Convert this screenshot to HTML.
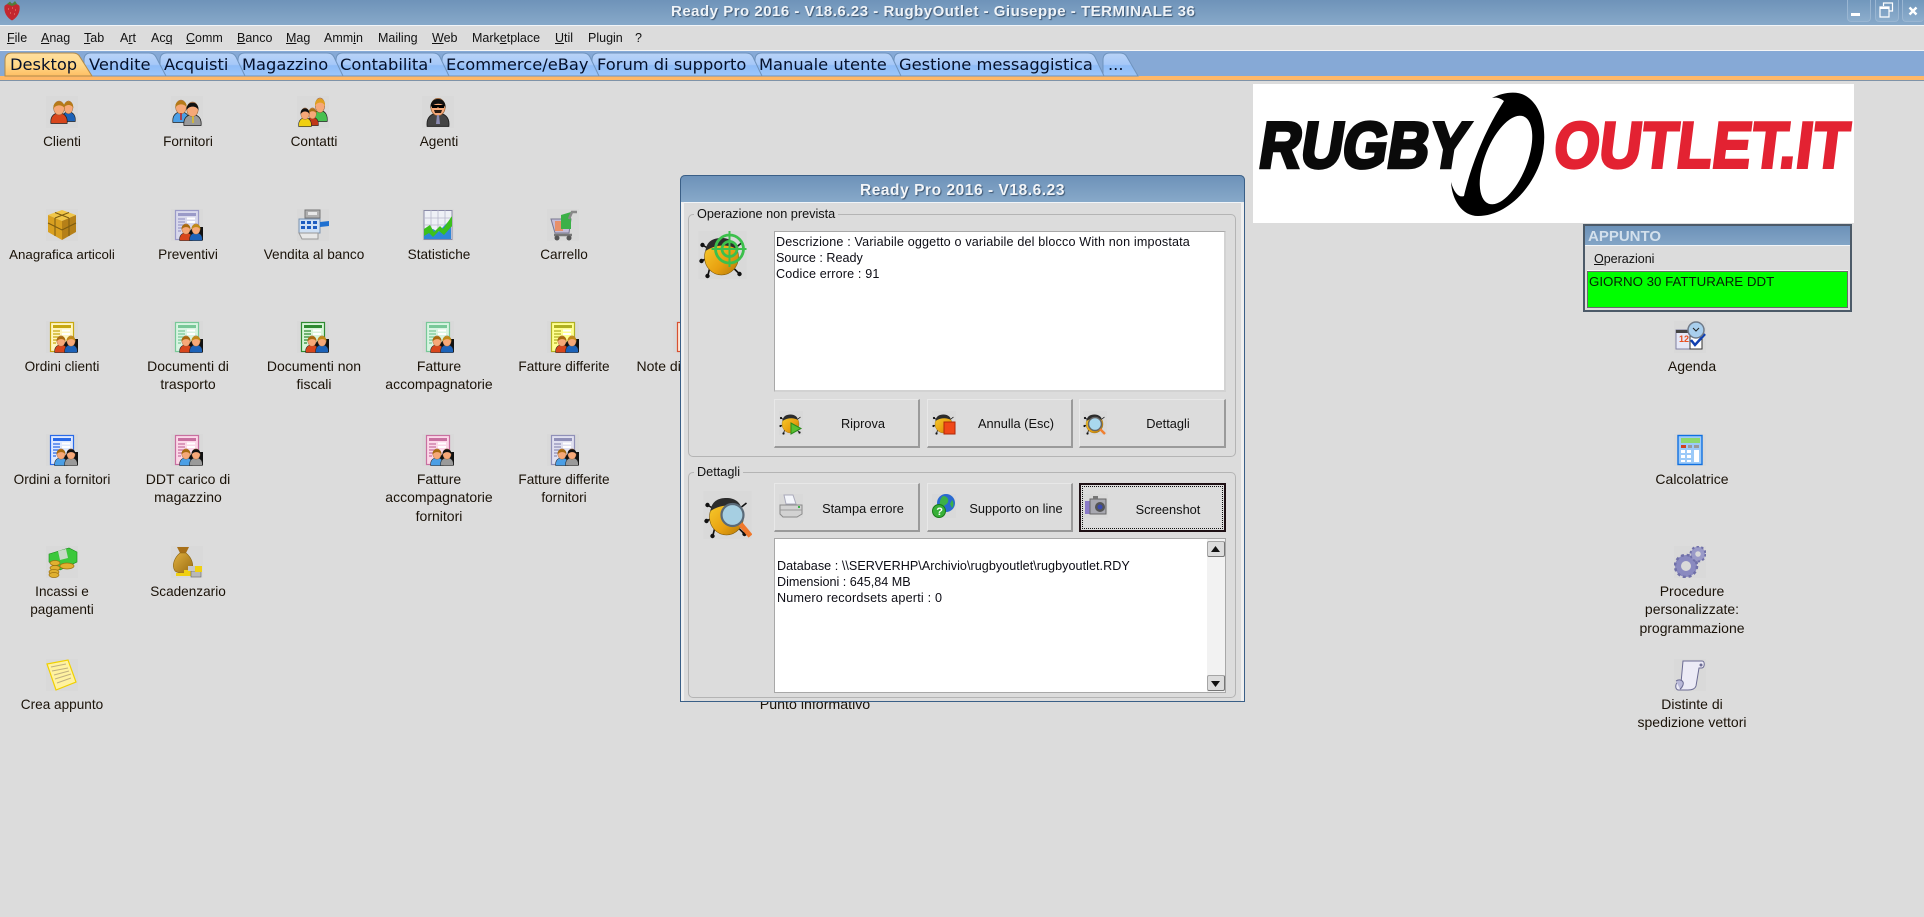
<!DOCTYPE html>
<html lang="it"><head><meta charset="utf-8"><title>Ready Pro 2016</title>
<style>
html,body{margin:0;padding:0}
body{width:1924px;height:917px;overflow:hidden;background:#dcdcdc;position:relative;font-family:"Liberation Sans",sans-serif;color:#111}
.a{position:absolute}
svg.i{position:absolute;width:32px;height:32px}
.l{position:absolute;width:140px;text-align:center;font-size:13.6px;line-height:18.3px;color:#1a1208}
.w{font-size:14px;margin-top:-1px}
.m{position:absolute;top:31px;font-size:12.5px;line-height:15px;color:#111}
.t{position:absolute;top:53px;font:16.3px/24px "DejaVu Sans",sans-serif;color:#05102a;white-space:nowrap}
.btn{position:absolute;width:146px;height:49px;box-sizing:border-box;background:#dcdcdc;border:1px solid #c4c4c4;border-right:2px solid #9a9a9a;border-bottom:2px solid #9a9a9a;border-top-color:#e8e8e8;border-left-color:#e8e8e8}
.bt{position:absolute;width:146px;text-align:center;font-size:12.8px;line-height:16px;color:#111}
.tx{position:absolute;font-size:12.6px;line-height:16px;white-space:nowrap;color:#0c0c14}
.grp{position:absolute;box-sizing:border-box;border:1px solid #b4b4b4;border-radius:5px}
.lg{position:absolute;background:#dcdcdc;padding:0 3px;font-size:12.7px;line-height:16px;color:#111;white-space:nowrap}
.wb{position:absolute;top:0;width:24px;height:22px;box-sizing:border-box;background:linear-gradient(#7197bc,#8cadcc);border:1px solid #9ab6d2;border-top:0;border-radius:0 0 4px 4px}
.sb{position:absolute;left:1207px;width:18px;height:16px;box-sizing:border-box;background:#dcdcdc;border:1px solid #a5a5a5;border-right-color:#777;border-bottom-color:#777;border-radius:2px}
</style></head><body>

<svg width="0" height="0" style="position:absolute">
<defs>
<linearGradient id="gold" x1="0" y1="0" x2="1" y2="1"><stop offset="0" stop-color="#f8d030"/><stop offset=".6" stop-color="#e8a010"/><stop offset="1" stop-color="#b07808"/></linearGradient>
<linearGradient id="bag" x1="0" y1="0" x2="1" y2="1"><stop offset="0" stop-color="#e0b040"/><stop offset="1" stop-color="#9a6c10"/></linearGradient>
<linearGradient id="tb" x1="0" y1="0" x2="0" y2="1"><stop offset="0" stop-color="#b9d3f7"/><stop offset=".5" stop-color="#a6c8f8"/><stop offset=".55" stop-color="#8fbcf7"/><stop offset="1" stop-color="#9cc6fb"/></linearGradient>
<linearGradient id="ta" x1="0" y1="0" x2="0" y2="1"><stop offset="0" stop-color="#ffdf9e"/><stop offset=".5" stop-color="#ffd88a"/><stop offset="1" stop-color="#ffbf63"/></linearGradient>
<symbol id="p" viewBox="0 0 20 24" preserveAspectRatio="none"><path d="M1 23.500C0 16 5 13 10 13s10 3 9 10.500Z" stroke="#222" stroke-width=".8"/><ellipse cx="10" cy="8" rx="6" ry="7" fill="#f6a878" stroke="#8a5a30" stroke-width=".5"/><path d="M3.800 9C2.500 -1 17.500 -1 16.200 9 15 4.500 6 4 3.800 9Z" style="fill:var(--h,#a86a10)"/></symbol>
<symbol id="doc" viewBox="0 0 32 32">
<rect width="32" height="32" fill="#d9d9d9"/>
<rect x="4.500" y="1.500" width="23" height="29" style="fill:var(--b,#fff);stroke:var(--c)" stroke-width="1.200"/>
<rect x="7" y="4" width="18" height="3" style="fill:var(--c)"/>
<path d="M7 10h7M7 13h7M7 16h6M7 19h4M7 22h3" style="stroke:var(--c)" stroke-width="1.200"/>
<path d="M16 9.500h8M16 13h8" stroke="#fff" stroke-width="2"/>
<path d="M22 18h10v13H14v-3Z" fill="#111"/>
</symbol>
<symbol id="bug" viewBox="0 0 48 48">
<rect width="48" height="48" fill="#d9d9d9"/>
<path d="M9 17 4 14M7 28 3 30M11 38 9 46M36 38 41 43M38 16 43 12" stroke="#111" stroke-width="1.600" fill="none"/>
<circle cx="4" cy="14" r="2.200" fill="#111"/><circle cx="3" cy="30" r="2.200" fill="#111"/><circle cx="9" cy="45" r="2.200" fill="#111"/><circle cx="41" cy="43" r="2.200" fill="#111"/>
<ellipse cx="23" cy="26" rx="17" ry="18" fill="url(#gold)" stroke="#7a5408" stroke-width=".6"/>
<path d="M7 20C8 10 15 7 23 7s14 4 15 11C30 13 17 13 7 20Z" fill="#2c2c2c"/>
</symbol>
</defs>
</svg>

<!-- title bar -->
<div class="a" style="left:0;top:0;width:1924px;height:25px;background:linear-gradient(#6e93b9,#87a9c9)"></div>
<div class="a" style="left:0;top:25px;width:1924px;height:1px;background:#f2f5f8"></div>
<svg class="a" style="left:3px;top:0" width="18" height="21" viewBox="0 0 18 21"><path d="M9 20.500C4 18 .5 12 1.500 6 4 2.500 14 2.500 16.500 6c1 6-2.500 12-7.500 14.500Z" fill="#c3272f"/><path d="M4 4 7 1.500 9 4l3-3 2 3-5 2Z" fill="#4f7f3a"/><path d="M5 9h1M9 8h1M13 10h-1M7 13h1M11 14h1" stroke="#f08a7e"/></svg>
<div class="a" style="left:671px;top:3px;width:540px;font-weight:bold;font-size:15px;letter-spacing:.5px;line-height:18px;color:#eef3f8;text-shadow:1px 1px 1px #3d5570;white-space:nowrap">Ready Pro 2016 - V18.6.23 - RugbyOutlet - Giuseppe - TERMINALE 36</div>
<div class="wb" style="left:1847px"><div class="a" style="left:3px;top:13px;width:9px;height:3px;background:#fff"></div></div>
<div class="wb" style="left:1875px"><svg class="a" style="left:3px;top:2px" width="15" height="16" viewBox="0 0 15 16"><path d="M4.500 4V1h9v8H10M1 5h9v10H1Z" fill="none" stroke="#fff" stroke-width="1.200"/><path d="M1 6h9" stroke="#fff" stroke-width="2"/></svg></div>
<div class="wb" style="left:1902px;width:22px;border-right:0"><svg class="a" style="left:5px;top:6px" width="10" height="10" viewBox="0 0 10 10"><path d="M1.500 1.500l7 7M8.500 1.500l-7 7" stroke="#fff" stroke-width="2.400"/></svg></div>

<!-- menu -->
<div class="m" style="left:7px"><u>F</u>ile</div>
<div class="m" style="left:41px"><u>A</u>nag</div>
<div class="m" style="left:84px"><u>T</u>ab</div>
<div class="m" style="left:120px">A<u>r</u>t</div>
<div class="m" style="left:151px">Ac<u>q</u></div>
<div class="m" style="left:186px"><u>C</u>omm</div>
<div class="m" style="left:237px"><u>B</u>anco</div>
<div class="m" style="left:286px"><u>M</u>ag</div>
<div class="m" style="left:324px">Amm<u>i</u>n</div>
<div class="m" style="left:378px">Mailin<u>g</u></div>
<div class="m" style="left:432px"><u>W</u>eb</div>
<div class="m" style="left:472px">Mark<u>e</u>tplace</div>
<div class="m" style="left:555px"><u>U</u>til</div>
<div class="m" style="left:588px">Plugin</div>
<div class="m" style="left:635px">?</div>

<!-- tabs -->
<div class="a" style="left:0;top:50px;width:1924px;height:1px;background:#f5f5f5"></div>
<div class="a" style="left:0;top:51px;width:1924px;height:25px;background:#86a9d6"></div>
<div class="a" style="left:0;top:76px;width:1924px;height:5px;box-sizing:border-box;background:#ffb868;border-bottom:1px solid #7f93a8"></div>
<svg class="a" style="left:0;top:51px" width="1160" height="26" viewBox="0 51 1160 26">
<g fill="url(#tb)" stroke="#6f93bd" stroke-width="1">
<path d="M1103 76V60Q1103 53 1110 53H1120Q1125 53 1127 57L1138 76Z"/>
<path d="M894 76V60Q894 53 901 53H1088Q1093 53 1095 57L1104 76Z"/>
<path d="M755 76V60Q755 53 762 53H885Q890 53 892 57L901 76Z"/>
<path d="M592 76V60Q592 53 599 53H746Q751 53 753 57L762 76Z"/>
<path d="M442 76V60Q442 53 449 53H583Q588 53 590 57L599 76Z"/>
<path d="M336 76V60Q336 53 343 53H433Q438 53 440 57L449 76Z"/>
<path d="M238 76V60Q238 53 245 53H327Q332 53 334 57L343 76Z"/>
<path d="M160 76V60Q160 53 167 53H229Q234 53 236 57L245 76Z"/>
<path d="M84 76V60Q84 53 91 53H149Q154 53 156 57L166 76Z"/>
</g>
<path d="M5 76V60Q5 53 12 53H73Q78 53 80 57L92 76Z" fill="url(#ta)" stroke="#b08a4a"/>
</svg>
<div class="t" style="left:10px">Desktop</div>
<div class="t" style="left:89px">Vendite</div>
<div class="t" style="left:164px">Acquisti</div>
<div class="t" style="left:242px">Magazzino</div>
<div class="t" style="left:340px">Contabilita'</div>
<div class="t" style="left:446px">Ecommerce/eBay</div>
<div class="t" style="left:597px">Forum di supporto</div>
<div class="t" style="left:759px">Manuale utente</div>
<div class="t" style="left:899px">Gestione messaggistica</div>
<div class="t" style="left:1108px">...</div>

<!-- icons row 1 -->
<svg class="i" style="left:46px;top:96px" viewBox="0 0 32 32"><rect width="32" height="32" fill="#d9d9d9"/><use href="#p" x="15" y="4" width="15" height="22" fill="#1c62b8" style="--h:#b57a18"/><use href="#p" x="4" y="4" width="18" height="24" fill="#d8461c" style="--h:#b57a18"/></svg>
<svg class="i" style="left:171px;top:96px" viewBox="0 0 32 32"><rect width="32" height="32" fill="#d9d9d9"/><use href="#p" x="1" y="3" width="18" height="24" fill="#4b9fe6" style="--h:#b57a18"/><use href="#p" x="12" y="5" width="19" height="25" fill="#9a9a9a" style="--h:#111"/><path d="M10 17v7" stroke="#c02020" stroke-width="1.500"/><path d="M22 20v7" stroke="#e2c020" stroke-width="1.500"/></svg>
<svg class="i" style="left:297px;top:96px" viewBox="0 0 32 32"><rect width="32" height="32" fill="#d9d9d9"/><use href="#p" x="15" y="1" width="16" height="25" fill="#48c050" style="--h:#e0a020"/><use href="#p" x="9" y="11" width="13" height="19" fill="#c03818" style="--h:#a87018"/><use href="#p" x="1" y="11" width="14" height="20" fill="#f0d010" style="--h:#111"/></svg>
<svg class="i" style="left:422px;top:96px" viewBox="0 0 32 32"><rect width="32" height="32" fill="#d9d9d9"/><use href="#p" x="4" y="1" width="24" height="30" fill="#444" style="--h:#111"/><path d="M10 9h12v3h-5l-1-1-1 1h-5Z" fill="#000"/><path d="M12 14h8l-1 3h-6Z" fill="#2a1a10"/><path d="M15 19h2l1 9h-4Z" fill="#8a8ab0"/></svg>
<!-- row 2 -->
<svg class="i" style="left:46px;top:209px" viewBox="0 0 32 32"><rect width="32" height="32" fill="#d9d9d9"/><path d="M2 6 16 1l14 5-14 6Z" fill="#f0c648"/><path d="M2 6v17l14 8V12Z" fill="#d9a020"/><path d="M30 6v17l-14 8V12Z" fill="#b58018"/><path d="M9 3.500l14 5.500M23 3.500 9 9M9 9v18M23 9v18M2 14l14 7 14-7" stroke="#7a5a10" stroke-width="1" fill="none"/></svg>
<svg class="i" style="left:171px;top:209px;--c:#9a9ac8;--b:#d8d8ec" viewBox="0 0 32 32"><use href="#doc" width="32" height="32"/><use href="#p" x="8" y="14" width="14" height="18" fill="#d8461c" style="--h:#a86a10"/><use href="#p" x="18" y="14" width="14" height="18" fill="#1c62b8" style="--h:#c08a18"/></svg>
<svg class="i" style="left:297px;top:209px" viewBox="0 0 32 32"><rect width="32" height="32" fill="#d9d9d9"/><rect x="8" y="1" width="15" height="8" fill="#b0b0b0" stroke="#777"/><rect x="11" y="3" width="9" height="3" fill="#e8e8e8"/><path d="M2 10h21v14H2Z" fill="#cfe0f4" stroke="#7a92b0"/><path d="M4 12h4v3H4ZM10 12h4v3h-4ZM16 12h4v3h-4ZM4 17h4v3H4ZM10 17h4v3h-4ZM16 17h4v3h-4Z" fill="#1d5cc0"/><path d="M2 24h19v6H5Z" fill="#e8e8e8" stroke="#999"/><path d="M23 13l9-1v5l-9 1Z" fill="#1f70d0"/></svg>
<svg class="i" style="left:422px;top:209px" viewBox="0 0 32 32"><rect width="32" height="32" fill="#d9d9d9"/><rect x="2" y="1.500" width="28" height="29" fill="#eef0f6" stroke="#8a8aa8"/><path d="M2 9h28M2 16h28M9 1v29M16 1v29M23 1v29" stroke="#b8b8cc" stroke-width=".8"/><path d="M2 30V24l9-4 5 3 13-13v20Z" fill="#2f86d8"/><path d="M2 20l6-4 4 7 6-6 3 3 9-13v10l-8 9-5-4-6 6-4-4-5 3Z" fill="#3cc01c"/></svg>
<svg class="i" style="left:547px;top:209px" viewBox="0 0 32 32"><rect width="32" height="32" fill="#d9d9d9"/><path d="M4 10h20l-2 14H8Z" fill="#c4bcd8" stroke="#777790"/><rect x="8" y="12" width="8" height="10" fill="#e8906a"/><path d="M14 6l10-3v17H14Z" fill="#3cb048"/><path d="M22 10 25 3h5" fill="none" stroke="#888" stroke-width="2.500"/><path d="M7 26h18" stroke="#777" stroke-width="2.500"/><circle cx="10" cy="29" r="2.500" fill="#555"/><circle cx="22" cy="29" r="2.500" fill="#555"/></svg>
<!-- row 3 -->
<svg class="i" style="left:46px;top:321px;--c:#c8a810;--b:#fff6c0" viewBox="0 0 32 32"><use href="#doc" width="32" height="32"/><use href="#p" x="8" y="14" width="14" height="18" fill="#d8461c"/><use href="#p" x="18" y="14" width="14" height="18" fill="#1c62b8" style="--h:#c08a18"/></svg>
<svg class="i" style="left:171px;top:321px;--c:#78c898;--b:#d8f4e2" viewBox="0 0 32 32"><use href="#doc" width="32" height="32"/><use href="#p" x="8" y="14" width="14" height="18" fill="#d8461c"/><use href="#p" x="18" y="14" width="14" height="18" fill="#1c62b8" style="--h:#c08a18"/></svg>
<svg class="i" style="left:297px;top:321px;--c:#2e8a30;--b:#d8f4d8" viewBox="0 0 32 32"><use href="#doc" width="32" height="32"/><use href="#p" x="8" y="14" width="14" height="18" fill="#d8461c"/><use href="#p" x="18" y="14" width="14" height="18" fill="#1c62b8" style="--h:#c08a18"/></svg>
<svg class="i" style="left:422px;top:321px;--c:#78c898;--b:#d8f4e2" viewBox="0 0 32 32"><use href="#doc" width="32" height="32"/><use href="#p" x="8" y="14" width="14" height="18" fill="#d8461c"/><use href="#p" x="18" y="14" width="14" height="18" fill="#1c62b8" style="--h:#c08a18"/></svg>
<svg class="i" style="left:547px;top:321px;--c:#b0b020;--b:#ffff90" viewBox="0 0 32 32"><use href="#doc" width="32" height="32"/><use href="#p" x="8" y="14" width="14" height="18" fill="#d8461c"/><use href="#p" x="18" y="14" width="14" height="18" fill="#1c62b8" style="--h:#c08a18"/></svg>
<svg class="i" style="left:673px;top:321px;--c:#d85030;--b:#ffe8d8" viewBox="0 0 32 32"><use href="#doc" width="32" height="32"/></svg>
<!-- row 4 -->
<svg class="i" style="left:46px;top:434px;--c:#2a6ae8;--b:#dfe9ff" viewBox="0 0 32 32"><use href="#doc" width="32" height="32"/><use href="#p" x="8" y="14" width="14" height="18" fill="#4b9fe6"/><use href="#p" x="18" y="14" width="14" height="18" fill="#9a9a9a" style="--h:#111"/></svg>
<svg class="i" style="left:171px;top:434px;--c:#c870a0;--b:#fbd8e8" viewBox="0 0 32 32"><use href="#doc" width="32" height="32"/><use href="#p" x="8" y="14" width="14" height="18" fill="#4b9fe6"/><use href="#p" x="18" y="14" width="14" height="18" fill="#9a9a9a" style="--h:#111"/></svg>
<svg class="i" style="left:422px;top:434px;--c:#c870a0;--b:#fbd8e8" viewBox="0 0 32 32"><use href="#doc" width="32" height="32"/><use href="#p" x="8" y="14" width="14" height="18" fill="#4b9fe6"/><use href="#p" x="18" y="14" width="14" height="18" fill="#9a9a9a" style="--h:#111"/></svg>
<svg class="i" style="left:547px;top:434px;--c:#9090b8;--b:#e0e0f0" viewBox="0 0 32 32"><use href="#doc" width="32" height="32"/><use href="#p" x="8" y="14" width="14" height="18" fill="#4b9fe6"/><use href="#p" x="18" y="14" width="14" height="18" fill="#9a9a9a" style="--h:#111"/></svg>
<!-- row 5 -->
<svg class="i" style="left:46px;top:546px" viewBox="0 0 32 32"><rect width="32" height="32" fill="#d9d9d9"/><path d="M3 8l20-6 8 4v10L14 24 3 16Z" fill="#3cc83c" stroke="#188a18" stroke-width=".6"/><path d="M12 5l8-2 2 9-8 2Z" fill="#c8d8c8"/><g fill="#e0b030" stroke="#9a7010" stroke-width=".7"><ellipse cx="21" cy="20" rx="7" ry="3"/><ellipse cx="9" cy="17" rx="5" ry="2.500"/><ellipse cx="9" cy="22" rx="5" ry="2.500"/><ellipse cx="8" cy="26" rx="5" ry="2.500"/><ellipse cx="8" cy="29" rx="5" ry="2.500"/></g></svg>
<svg class="i" style="left:171px;top:546px" viewBox="0 0 32 32"><rect width="32" height="32" fill="#d9d9d9"/><path d="M6 1h12l-3 6h-6Z" fill="#a87018"/><path d="M9 7h6c6 5 8 12 6 17-2 4-13 4-17 1C0 19 4 11 9 7Z" fill="url(#bag)" stroke="#8a6410" stroke-width=".6"/><path d="M5 27h10v3H5Z" fill="#f0d010"/><rect x="13" y="24" width="7" height="6" fill="#f0d010"/><rect x="20" y="25" width="10" height="6" fill="#b8b8b8" stroke="#666" stroke-width=".6"/><rect x="24" y="20" width="7" height="6" fill="#f0d010"/><rect x="17" y="20" width="7" height="5" fill="#c8c8c8"/></svg>
<!-- row 6 -->
<svg class="i" style="left:46px;top:659px" viewBox="0 0 32 32"><rect width="32" height="32" fill="#d9d9d9"/><path d="M1 5 22 1 30 23 10 31Z" fill="#fff2a0" stroke="#f0d000" stroke-width="1.200"/><path d="M5 8l15-3M6 12l16-3M8 16l15-4M9 20l16-5M11 24l14-5" stroke="#c0b080" stroke-width="1"/></svg>
<!-- right column -->
<svg class="i" style="left:1674px;top:321px" viewBox="0 0 32 32"><rect width="32" height="32" fill="#d9d9d9"/><rect x="2" y="9" width="17" height="19" fill="#e6e8f6" stroke="#8080a0"/><path d="M2 9h16v3H2Z" fill="#444"/><text x="5" y="21" font-family="Liberation Sans" font-size="9" font-weight="bold" fill="#e85020">12</text><rect x="16" y="15" width="12" height="13" fill="#fff" stroke="#333"/><path d="M17 19l4 5 10-11" fill="none" stroke="#1040b0" stroke-width="2.500"/><circle cx="22" cy="9" r="8" fill="#a9cfee" stroke="#707a88" stroke-width="1.500"/><path d="M19 7l3 3 3-3" fill="none" stroke="#222"/></svg>
<svg class="i" style="left:1674px;top:434px" viewBox="0 0 32 32"><rect width="32" height="32" fill="#d9d9d9"/><rect x="4" y="1.500" width="24" height="29" fill="#9ccaf8" stroke="#1070e0" stroke-width="1.400"/><rect x="7" y="4" width="19" height="5" fill="#8cd86c"/><path d="M7 11h5v3H7Z" fill="#d04020"/><path d="M14 11h4v3h-4ZM20 11h5v3h-5Z" fill="#999"/><path d="M7 16h4v3H7ZM13 16h4v3h-4ZM7 21h4v3H7ZM13 21h4v3h-4ZM7 26h4v2H7ZM13 26h4v2h-4ZM20 16h5v12h-5Z" fill="#fff"/></svg>
<svg class="i" style="left:1674px;top:546px" viewBox="0 0 32 32"><rect width="32" height="32" fill="#d9d9d9"/><circle cx="12" cy="20" r="8" fill="none" stroke="#8a8ac0" stroke-width="6"/><circle cx="12" cy="20" r="11" fill="none" stroke="#7070a8" stroke-width="2.500" stroke-dasharray="3 2.800"/><circle cx="24" cy="8" r="5" fill="none" stroke="#9a9ac8" stroke-width="4.500"/><circle cx="24" cy="8" r="7.500" fill="none" stroke="#7070a8" stroke-width="2" stroke-dasharray="2.500 2.300"/></svg>
<svg class="i" style="left:1674px;top:659px" viewBox="0 0 32 32"><rect width="32" height="32" fill="#d9d9d9"/><path d="M9 2h19c3 0 3 6 0 7h-3l-3 18c-1 3-4 4-8 4H4c-3-1-3-6 0-8l3 1Z" fill="#ecebf6" stroke="#6a6a92"/><path d="M2 22c3-2 6-1 7 1s-1 6-3 7" fill="#b8b8d8" stroke="#6a6a92"/><circle cx="27" cy="6" r="1.500" fill="#6a6a92"/></svg>

<!-- labels -->
<div class="l" style="left:-8px;top:133px">Clienti</div>
<div class="l" style="left:118px;top:133px">Fornitori</div>
<div class="l" style="left:244px;top:133px">Contatti</div>
<div class="l" style="left:369px;top:133px">Agenti</div>
<div class="l" style="left:-8px;top:246px;font-size:13.3px">Anagrafica articoli</div>
<div class="l" style="left:118px;top:246px">Preventivi</div>
<div class="l" style="left:244px;top:246px">Vendita al banco</div>
<div class="l" style="left:369px;top:246px">Statistiche</div>
<div class="l" style="left:494px;top:246px">Carrello</div>
<div class="l" style="left:-8px;top:358px">Ordini clienti</div>
<div class="l w" style="left:118px;top:358px">Documenti di<br>trasporto</div>
<div class="l w" style="left:244px;top:358px">Documenti non<br>fiscali</div>
<div class="l w" style="left:369px;top:358px">Fatture<br>accompagnatorie</div>
<div class="l" style="left:494px;top:358px">Fatture differite</div>
<div class="l w" style="left:619px;top:358px">Note di accredito</div>
<div class="l" style="left:-8px;top:471px">Ordini a fornitori</div>
<div class="l w" style="left:118px;top:471px">DDT carico di<br>magazzino</div>
<div class="l w" style="left:369px;top:471px">Fatture<br>accompagnatorie<br>fornitori</div>
<div class="l" style="left:494px;top:471px">Fatture differite<br>fornitori</div>
<div class="l" style="left:-8px;top:583px">Incassi e<br>pagamenti</div>
<div class="l" style="left:118px;top:583px">Scadenzario</div>
<div class="l" style="left:-8px;top:696px">Crea appunto</div>
<div class="l" style="left:745px;top:696px;font-size:14.2px">Punto informativo</div>
<div class="l w" style="left:1622px;top:358px">Agenda</div>
<div class="l w" style="left:1622px;top:471px">Calcolatrice</div>
<div class="l w" style="left:1622px;top:583px">Procedure<br>personalizzate:<br>programmazione</div>
<div class="l w" style="left:1622px;top:696px">Distinte di<br>spedizione vettori</div>

<!-- logo -->
<svg class="a" style="left:1253px;top:84px" width="601" height="139" viewBox="1253 84 601 139">
<rect x="1253" y="84" width="601" height="139" fill="#fff"/>
<g transform="translate(1257 167.500) skewX(-9)"><text x="0" y="0" font-family="Liberation Sans" font-size="65" font-weight="bold" textLength="208" lengthAdjust="spacingAndGlyphs" fill="#0a0a0a" stroke="#0a0a0a" stroke-width="3.500">RUGBY</text></g>
<g transform="translate(1552 167.500) skewX(-7)"><text x="0" y="0" font-family="Liberation Sans" font-size="65" font-weight="bold" textLength="294" lengthAdjust="spacingAndGlyphs" fill="#e32232" stroke="#e32232" stroke-width="3">OUTLET.IT</text></g>
<path d="M1492 98C1502 93 1516 90 1526 96 1544 107 1548 136 1541 160 1531 191 1505 216 1478 216 1462 216 1452 200 1451 182 1454 193 1459 198 1464 196 1470 170 1482 135 1504 101 1500 98 1497 97 1492 98Z" fill="#000"/>
<ellipse cx="1506" cy="160" rx="21" ry="47" transform="rotate(22 1506 160)" fill="#fff"/>
</svg>

<!-- appunto -->
<div class="a" style="left:1583px;top:224px;width:269px;height:88px;box-sizing:border-box;border:2px solid #4c5a68;background:#dcdcdc"></div>
<div class="a" style="left:1585px;top:226px;width:265px;height:19px;background:linear-gradient(#6c91b8,#83a5c6)"></div>
<div class="a" style="left:1588px;top:228px;font-weight:bold;font-size:15px;line-height:18px;color:#d3e0ec">APPUNTO</div>
<div class="a" style="left:1585px;top:245px;width:265px;height:1px;background:#f2f5f8"></div>
<div class="a" style="left:1594px;top:251px;font-size:12.5px;line-height:16px"><u>O</u>perazioni</div>
<div class="a" style="left:1587px;top:270px;width:261px;height:1px;background:#f5f5f5"></div>
<div class="a" style="left:1587px;top:271px;width:261px;height:37px;box-sizing:border-box;background:#0f0;border:1px solid #6a6a6a"></div>
<div class="a" style="left:1589px;top:273px;font-size:13.3px;line-height:17px;color:#062006;white-space:nowrap">GIORNO 30 FATTURARE DDT</div>

<!-- dialog -->
<div class="a" style="left:680px;top:175px;width:565px;height:527px;box-sizing:border-box;background:#dcdcdc;border:1px solid #3a5f87;border-top:0;border-radius:5px 5px 0 0;box-shadow:inset 3px 0 0 #f0f0f0,inset -3px 0 0 #f0f0f0"></div>
<div class="a" style="left:680px;top:175px;width:565px;height:27px;box-sizing:border-box;border:1px solid #3a5f87;border-bottom:0;border-radius:5px 5px 0 0;background:linear-gradient(#6d92b9,#87a9c9)"></div>
<div class="a" style="left:680px;top:182px;width:565px;text-align:center;font-weight:bold;font-size:15.500px;letter-spacing:.55px;line-height:18px;color:#f2f5f8;text-shadow:1px 1px 1px #3d5570">Ready Pro 2016 - V18.6.23</div>
<div class="a" style="left:684px;top:202px;width:557px;height:1px;background:#f2f5f8"></div>

<div class="grp" style="left:688px;top:214px;width:548px;height:243px"></div>
<div class="lg" style="left:694px;top:206px">Operazione non prevista</div>
<svg class="a" style="left:698px;top:231px" width="49" height="48" viewBox="0 0 48 48"><use href="#bug" width="48" height="48"/><g fill="none" stroke="#3cc04c" stroke-width="2.800"><circle cx="31" cy="18" r="14"/><circle cx="31" cy="18" r="7.500"/></g><path d="M31 0v36M13 18h35" stroke="#3cc04c" stroke-width="2"/></svg>
<div class="a" style="left:774px;top:231px;width:452px;height:161px;box-sizing:border-box;background:#fff;border:2px solid #d2d2d2;border-top:1px solid #a8a8a8;border-left:1px solid #a8a8a8"></div>
<div class="tx" style="left:776px;top:234px;letter-spacing:.16px">Descrizione : Variabile oggetto o variabile del blocco With non impostata</div>
<div class="tx" style="left:776px;top:250px">Source : Ready</div>
<div class="tx" style="left:776px;top:266px;letter-spacing:.15px">Codice errore : 91</div>

<div class="btn" style="left:774px;top:399px"></div>
<div class="btn" style="left:927px;top:399px"></div>
<div class="btn" style="left:1079px;top:399px;width:147px"></div>
<svg class="a" style="left:779px;top:411px" width="24" height="24" viewBox="0 0 48 48"><use href="#bug" width="48" height="48"/><path d="M24 24v22l20-11Z" fill="#58c030" stroke="#2a8a1a" stroke-width="2"/></svg>
<svg class="a" style="left:932px;top:411px" width="24" height="24" viewBox="0 0 48 48"><use href="#bug" width="48" height="48"/><rect x="24" y="22" width="22" height="24" fill="#f04818" stroke="#b02808" stroke-width="2"/></svg>
<svg class="a" style="left:1083px;top:411px" width="24" height="24" viewBox="0 0 48 48"><use href="#bug" width="48" height="48"/><circle cx="24" cy="26" r="13" fill="#a9d8ee" stroke="#666" stroke-width="3"/><path d="M34 36l10 10" stroke="#f08030" stroke-width="5"/></svg>
<div class="bt" style="left:790px;top:416px">Riprova</div>
<div class="bt" style="left:943px;top:416px">Annulla (Esc)</div>
<div class="bt" style="left:1095px;top:416px">Dettagli</div>

<div class="grp" style="left:688px;top:472px;width:548px;height:226px"></div>
<div class="lg" style="left:694px;top:464px">Dettagli</div>
<svg class="a" style="left:703px;top:491px" width="49" height="48" viewBox="0 0 48 48"><use href="#bug" width="48" height="48"/><circle cx="29" cy="24" r="11" fill="#a6cfe2" stroke="#5a6a78" stroke-width="2.200"/><path d="M37 33l10 12" stroke="#f0782c" stroke-width="5"/></svg>
<div class="btn" style="left:774px;top:483px"></div>
<div class="btn" style="left:927px;top:483px"></div>
<div class="btn" style="left:1079px;top:483px;width:147px;background:#dcdcdc;border:2px solid #1e1014"></div>
<div class="a" style="left:1082px;top:486px;width:141px;height:43px;box-sizing:border-box;border:1px dotted #111"></div>
<svg class="a" style="left:779px;top:494px" width="24" height="24" viewBox="0 0 24 24"><rect width="24" height="24" fill="#d9d9d9"/><path d="M5 1h9l3 9H7Z" fill="#f4f6fb" stroke="#aab"/><path d="M1 11h22v9L18 23H4l-3-3Z" fill="#d2d2d2" stroke="#8a8a8a"/><path d="M1 16h22" stroke="#999"/><path d="M19 13h2" stroke="#3cb048" stroke-width="2"/></svg>
<svg class="a" style="left:932px;top:494px" width="24" height="24" viewBox="0 0 24 24"><rect width="24" height="24" fill="#d9d9d9"/><circle cx="14" cy="9" r="9" fill="#2a6ad0"/><path d="M11 2c4 0 6 3 5 6s-5 3-6 7c-3-2-3-10 1-13ZM20 6c2 2 2 6 0 8l-2-4Z" fill="#3cb048"/><circle cx="7" cy="17" r="6.500" fill="#38b038" stroke="#1a7a1a"/><text x="4.200" y="21" font-family="Liberation Sans" font-size="11" font-weight="bold" fill="#fff">?</text></svg>
<svg class="a" style="left:1084px;top:494px" width="24" height="24" viewBox="0 0 24 24"><rect width="24" height="24" fill="#d9d9d9"/><rect x="1" y="7" width="5" height="13" fill="#8a7ac8"/><rect x="6" y="5" width="16" height="15" fill="#a8a8b0" stroke="#666"/><rect x="9" y="2" width="5" height="3" fill="#777"/><circle cx="16" cy="13" r="5" fill="#555"/><circle cx="16" cy="13" r="2.500" fill="#3a4ab0"/></svg>
<div class="bt" style="left:790px;top:501px">Stampa errore</div>
<div class="bt" style="left:943px;top:501px">Supporto on line</div>
<div class="bt" style="left:1095px;top:502px">Screenshot</div>

<div class="a" style="left:774px;top:538px;width:452px;height:155px;box-sizing:border-box;background:#fff;border:1px solid #a8a8a8"></div>
<div class="a" style="left:1207px;top:539px;width:18px;height:153px;background:#f2f2f2"></div>
<div class="sb" style="top:541px"><svg class="a" style="left:3px;top:4px" width="9" height="6" viewBox="0 0 9 6"><path d="M4.500 0 9 6H0Z" fill="#111"/></svg></div>
<div class="sb" style="top:675px"><svg class="a" style="left:3px;top:5px" width="9" height="6" viewBox="0 0 9 6"><path d="M0 0h9L4.500 6Z" fill="#111"/></svg></div>
<div class="tx" style="left:777px;top:558px;letter-spacing:.04px">Database : \\SERVERHP\Archivio\rugbyoutlet\rugbyoutlet.RDY</div>
<div class="tx" style="left:777px;top:574px">Dimensioni : 645,84 MB</div>
<div class="tx" style="left:777px;top:590px;letter-spacing:.2px">Numero recordsets aperti : 0</div>

</body></html>
